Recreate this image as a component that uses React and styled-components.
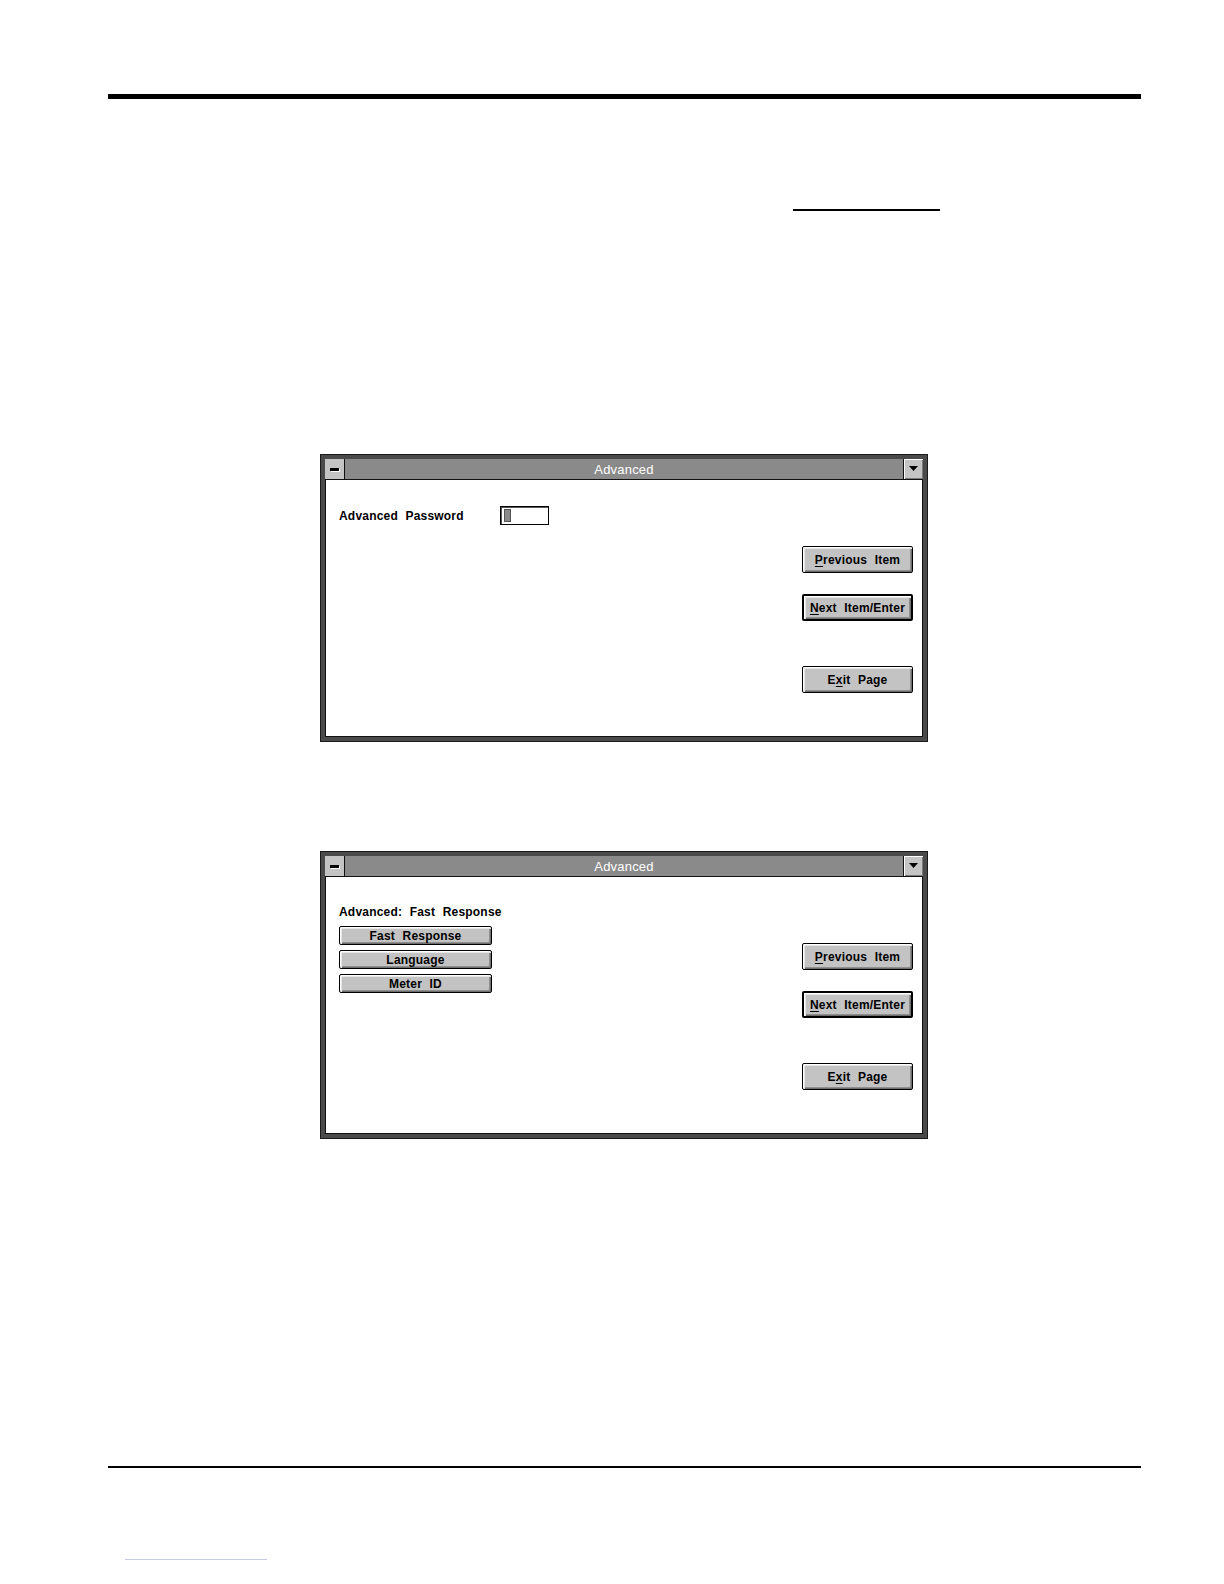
import React from "react";
import styled, { createGlobalStyle } from "styled-components";

const GlobalStyle = createGlobalStyle`
  html, body {
    margin: 0;
    padding: 0;
    background: #ffffff;
  }
  body {
    font-family: "Liberation Sans", Arial, sans-serif;
  }
`;

const Page = styled.div`
  width: 1224px;
  height: 1584px;
  display: flex;
  flex-direction: column;
  overflow: hidden;
`;

const Rule = styled.div`
  margin-top: ${({ $top }) => $top}px;
  margin-left: ${({ $left }) => $left}px;
  width: ${({ $width }) => $width}px;
  height: ${({ $thick }) => $thick}px;
  background: ${({ $color }) => $color || "#000"};
  flex-shrink: 0;
`;

const Window = styled.div`
  margin-top: ${({ $top }) => $top}px;
  margin-left: 321px;
  width: 606px;
  height: 286px;
  box-sizing: border-box;
  border: 4px solid #4a4a4a;
  box-shadow: 0 0 0 1px #1a1a1a, inset 0 0 0 1px #111;
  background: #fff;
  display: flex;
  flex-direction: column;
  flex-shrink: 0;
`;

const TitleBar = styled.div`
  height: 21px;
  display: flex;
  align-items: stretch;
  background: #8a8a8a;
  border-bottom: 1px solid #111;
  box-sizing: border-box;
`;

const CornerBox = styled.div`
  width: 20px;
  display: flex;
  align-items: center;
  justify-content: center;
  background: #c4c4c4;
  box-sizing: border-box;
  ${({ $side }) =>
    $side === "left"
      ? "border-right: 1px solid #111;"
      : "border-left: 1px solid #111; box-shadow: inset 1px 1px 0 #fff, inset -1px -1px 0 #7a7a7a;"}
`;

const Dash = styled.div`
  width: 9px;
  height: 3px;
  background: #000;
  box-shadow: 1px 1px 0 #fff;
`;

const Title = styled.div`
  flex: 1;
  display: flex;
  align-items: center;
  justify-content: center;
  color: #fff;
  font-size: 13px;
  letter-spacing: 0.2px;
`;

const Body = styled.div`
  flex: 1;
  display: flex;
  justify-content: space-between;
  padding: 0 10px 0 14px;
`;

const Left = styled.div`
  display: flex;
  flex-direction: column;
  padding-top: ${({ $top }) => $top}px;
`;

const FieldRow = styled.div`
  display: flex;
  align-items: center;
`;

const Label = styled.div`
  width: ${({ $w }) => ($w ? `${$w}px` : "auto")};
  font-size: 12px;
  font-weight: bold;
  letter-spacing: 0.2px;
  word-spacing: 4px;
  color: #000;
  line-height: 16px;
`;

const Input = styled.div`
  width: 49px;
  height: 19px;
  box-sizing: border-box;
  border: 1px solid #000;
  box-shadow: inset 1px 1px 0 #555;
  display: flex;
  align-items: center;
  padding-left: 3px;
`;

const Caret = styled.div`
  width: 7px;
  height: 13px;
  background: #8a8a8a;
  border: 1px solid #555;
  box-sizing: border-box;
`;

const ListButtons = styled.div`
  display: flex;
  flex-direction: column;
  gap: 5px;
  margin-top: 6px;
`;

const Right = styled.div`
  display: flex;
  flex-direction: column;
  padding-top: 66px;
`;

const PushButton = styled.button`
  width: ${({ $w }) => $w}px;
  height: ${({ $h }) => $h}px;
  margin-top: ${({ $gap }) => $gap || 0}px;
  box-sizing: border-box;
  padding: 0;
  background: #c3c3c3;
  border: ${({ $focused }) => ($focused ? "2px" : "1px")} solid #000;
  border-radius: 2px;
  box-shadow: inset 1px 1px 0 #fff, inset 2px 2px 0 #e6e6e6,
    inset -1px -1px 0 #6e6e6e, inset -2px -2px 0 #8e8e8e;
  font-family: "Liberation Sans", Arial, sans-serif;
  font-size: 12px;
  font-weight: bold;
  letter-spacing: 0.2px;
  word-spacing: 4px;
  color: #000;
  display: flex;
  align-items: center;
  justify-content: center;

  u {
    text-decoration-thickness: 1px;
    text-underline-offset: 2px;
  }
`;

function WindowFrame({ top, children }) {
  return (
    <Window $top={top}>
      <TitleBar>
        <CornerBox $side="left">
          <Dash />
        </CornerBox>
        <Title>Advanced</Title>
        <CornerBox $side="right">
          <svg width="9" height="6" viewBox="0 0 9 6">
            <path d="M0 0 H9 L4.5 5 Z" fill="#000" />
          </svg>
        </CornerBox>
      </TitleBar>
      <Body>
        {children}
        <Right>
          <PushButton $w={111} $h={27}>
            <span>
              <u>P</u>revious Item
            </span>
          </PushButton>
          <PushButton $w={111} $h={27} $gap={21} $focused>
            <span>
              <u>N</u>ext Item/Enter
            </span>
          </PushButton>
          <PushButton $w={111} $h={27} $gap={45}>
            <span>
              E<u>x</u>it Page
            </span>
          </PushButton>
        </Right>
      </Body>
    </Window>
  );
}

export default function App() {
  return (
    <Page>
      <GlobalStyle />
      <Rule $top={94} $left={108} $width={1033} $thick={5} />
      <Rule $top={110} $left={793} $width={147} $thick={2} />
      <WindowFrame top={244}>
        <Left $top={26}>
          <FieldRow>
            <Label $w={161}>Advanced Password</Label>
            <Input>
              <Caret />
            </Input>
          </FieldRow>
        </Left>
      </WindowFrame>
      <WindowFrame top={111}>
        <Left $top={27}>
          <Label>Advanced: Fast Response</Label>
          <ListButtons>
            <PushButton $w={153} $h={19}>Fast Response</PushButton>
            <PushButton $w={153} $h={19}>Language</PushButton>
            <PushButton $w={153} $h={19}>Meter ID</PushButton>
          </ListButtons>
        </Left>
      </WindowFrame>
      <Rule $top={328} $left={108} $width={1033} $thick={2} />
      <Rule $top={91} $left={125} $width={142} $thick={1} $color="#c4cbe4" />
    </Page>
  );
}
